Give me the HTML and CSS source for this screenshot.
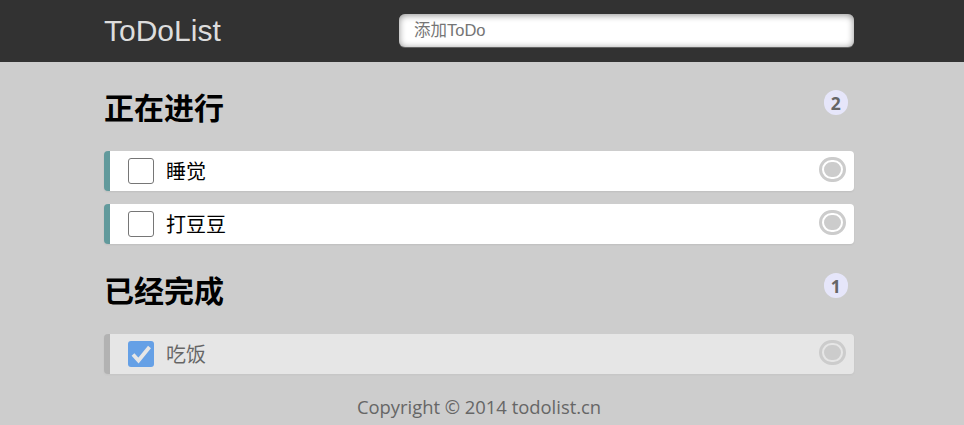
FILE: index.html
```html
<!DOCTYPE html>
<html lang="zh-CN">
<head>
<meta charset="utf-8">
<title>ToDoList</title>
<link rel="stylesheet" href="styles.css">
</head>
<body>
<header class="header">
  <div class="wrap header-inner">
    <label class="logo" for="title">ToDoList</label>
    <input class="add" id="title" type="text" placeholder="添加ToDo">
  </div>
</header>
<main class="wrap">
  <h2 class="heading">正在进行<span class="count">2</span></h2>
  <ol class="list">
    <li class="item"><label class="check"><input type="checkbox" class="check-input"></label><p class="text">睡觉</p><a class="del"></a></li>
    <li class="item"><label class="check"><input type="checkbox" class="check-input"></label><p class="text">打豆豆</p><a class="del"></a></li>
  </ol>
  <h2 class="heading heading-done">已经完成<span class="count">1</span></h2>
  <ul class="list">
    <li class="item done"><label class="check checked"><input type="checkbox" class="check-input" checked><svg class="tick" width="26" height="26" viewBox="0 0 26 26"><rect width="26" height="26" rx="3" fill="#0075FF"/><polyline points="5,13.5 10.5,19.5 21.5,6" fill="none" stroke="#fff" stroke-width="3.8"/></svg></label><p class="text">吃饭</p><a class="del"></a></li>
  </ul>
  <div class="footer">Copyright © 2014 todolist.cn</div>
</main>
</body>
</html>
```
FILE: styles.css
```css
html, body {
  margin: 0;
  padding: 0;
}
body {
  background: #CDCDCD;
  font-family: "Noto Sans CJK SC", "Noto Sans", sans-serif;
  font-size: 20px;
}
.wrap {
  width: 750px;
  margin: 0 auto;
  padding-right: 6px;
}
.header {
  height: 62px;
  background: #323232;
}
.header-inner {
  display: flex;
  justify-content: space-between;
  align-items: flex-start;
}
.logo {
  line-height: 62px;
  color: #DDD;
  font-size: 30px;
  font-family: "Liberation Sans", Arial, sans-serif;
  cursor: pointer;
}
.add {
  box-sizing: border-box;
  width: 455px;
  height: 33px;
  margin-top: 14px;
  padding: 0 2px;
  border: none;
  border-radius: 6px;
  text-indent: 13px;
  font-size: 16.5px;
  font-family: "Liberation Sans", "Noto Sans CJK SC", sans-serif;
  background: #fff;
  box-shadow: 0 1px 0 rgba(255,255,255,0.24), 0 1px 7px rgba(0,0,0,0.45) inset;
}
.add::placeholder {
  color: #757575;
}
.add:focus {
  outline: none;
}
.heading {
  position: relative;
  margin: 25px 0;
  font-size: 30px;
  line-height: 39px;
  font-weight: bold;
  color: #000;
}
.heading-done {
  margin-top: 26px;
}
.count {
  position: absolute;
  top: 3px;
  right: 6px;
  display: inline-block;
  min-width: 12.5px;
  padding: 0 6px;
  height: 25px;
  border-radius: 25px;
  background: #E6E6FA;
  line-height: 26px;
  text-align: center;
  color: #666;
  font-size: 17.5px;
  font-family: "Open Sans", sans-serif;
}
.list {
  margin: 20px 0;
  padding: 0;
  list-style: none;
}
.item {
  position: relative;
  height: 40px;
  line-height: 40px;
  background: #fff;
  margin-bottom: 12.5px;
  padding: 0 56px;
  border-radius: 4px;
  border-left: 6px solid #629A9C;
  box-shadow: 0 1px 2px rgba(0,0,0,0.07);
}
.item.done {
  border-left-color: #999;
  opacity: 0.5;
}
.text {
  margin: 0;
  color: #000;
}
.check {
  position: absolute;
  top: 7px;
  left: 18px;
  width: 26px;
  height: 26px;
  box-sizing: border-box;
  border: 1px solid #767676;
  border-radius: 3px;
  background: #fff;
  cursor: pointer;
}
.check.checked {
  border: none;
  background: transparent;
}
.check-input {
  position: absolute;
  opacity: 0;
  width: 0;
  height: 0;
  margin: 0;
}
.tick {
  display: block;
}
.del {
  position: absolute;
  top: 4px;
  right: 6px;
  display: inline-block;
  width: 17.5px;
  height: 15px;
  border-radius: 18px;
  border: 7.5px double #FFF;
  background: #CCC;
  cursor: pointer;
}
.footer {
  color: #666;
  font-size: 18.4px;
  text-align: center;
  font-family: "Open Sans", "Noto Sans CJK SC", sans-serif;
}
```
